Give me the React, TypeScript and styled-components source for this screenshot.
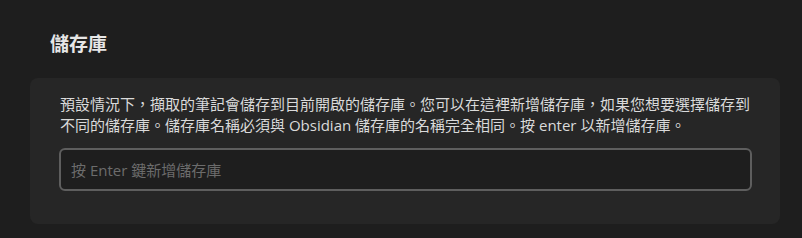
import React from 'react';
import styled, { createGlobalStyle } from 'styled-components';

const GlobalStyle = createGlobalStyle`
  html, body {
    margin: 0;
    padding: 0;
    background: #1e1e1e;
  }
  body {
    font-family: "Open Sans", "Noto Sans CJK TC", sans-serif;
    color: #dcddde;
  }
`;

const Page = styled.div`
  width: 802px;
  height: 238px;
  box-sizing: border-box;
  padding: 28px 22px 0 30px;
  background: #1e1e1e;
`;

const Heading = styled.h2`
  margin: 0 0 18px 20px;
  font-size: 19px;
  line-height: 32px;
  font-weight: 700;
  color: #e6e6e6;
`;

const Card = styled.section`
  display: flex;
  flex-direction: column;
  gap: 12px;
  padding: 16px 28px 33px 29px;
  background: #262626;
  border-radius: 8px;
`;

const Description = styled.p`
  margin: 0;
  padding-left: 1px;
  font-size: 15px;
  line-height: 21px;
  color: #dadada;
`;

const VaultInput = styled.input`
  box-sizing: border-box;
  display: block;
  width: 100%;
  height: 43px;
  padding: 0 10px;
  background: #1e1e1e;
  border: 2.5px solid #5e5e5e;
  border-radius: 6px;
  font-family: "Open Sans", "Noto Sans CJK TC", sans-serif;
  font-size: 15px;
  color: #dcddde;
  outline: none;
  caret-color: #dcddde;

  &::placeholder {
    color: #6c6c6c;
  }
`;

const App: React.FC = () => {
  return (
    <>
      <GlobalStyle />
      <Page>
        <Heading>儲存庫</Heading>
        <Card>
          <Description>
            預設情況下，擷取的筆記會儲存到目前開啟的儲存庫。您可以在這裡新增儲存庫，如果您想要選擇儲存到不同的儲存庫。儲存庫名稱必須與 Obsidian 儲存庫的名稱完全相同。按 enter 以新增儲存庫。
          </Description>
          <VaultInput autoFocus placeholder="按 Enter 鍵新增儲存庫" />
        </Card>
      </Page>
    </>
  );
};

export default App;
